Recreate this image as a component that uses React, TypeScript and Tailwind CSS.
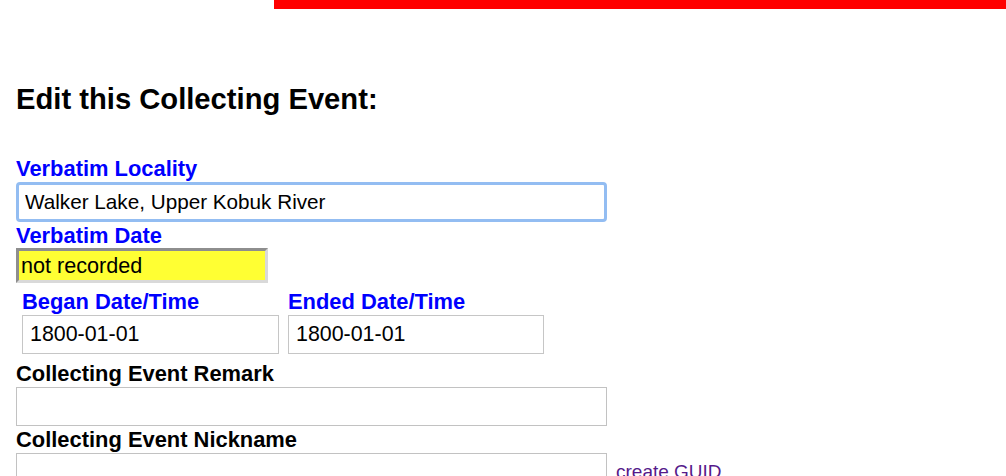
export default function App() {
  return (
    <div className="min-h-screen bg-white font-['Liberation_Sans',Arial,sans-serif] text-black">
      <div className="ml-[274px] h-[9px] bg-[#ff0000]"></div>
      <div className="pl-[16px]">
        <h2 className="mt-[74px] text-[29.2px] leading-[33px] font-bold">Edit this Collecting Event:</h2>

        <div className="mt-[41px] text-[21.9px] leading-[24px] font-bold text-[#0000ff]">Verbatim Locality</div>
        <input
          readOnly
          value="Walker Lake, Upper Kobuk River"
          className="mt-[1px] block box-border h-[40px] w-[591px] rounded-[4px] border-[3px] border-[#93bdf2] bg-white pl-[6px] text-[20.7px] outline-none"
        />

        <div className="mt-[2px] text-[21.9px] leading-[24px] font-bold text-[#0000ff]">Verbatim Date</div>
        <input
          readOnly
          value="not recorded"
          className="block box-border h-[35px] w-[252px] border-[3px] border-t-[#8e8e8e] border-l-[#8e8e8e] border-r-[#d9d9d9] border-b-[#d9d9d9] bg-[#ffff33] pl-[2px] text-[21.6px] outline-none"
        />

        <div className="mt-[7px] flex gap-[9px] pl-[6px]">
          <div className="flex w-[257px] flex-col">
            <div className="text-[21.9px] leading-[24px] font-bold text-[#0000ff]">Began Date/Time</div>
            <input
              readOnly
              value="1800-01-01"
              className="mt-[1px] block box-border h-[39px] w-[257px] border border-[#c6c6c6] bg-white pl-[7px] text-[21.4px] outline-none"
            />
          </div>
          <div className="flex w-[256px] flex-col">
            <div className="text-[21.9px] leading-[24px] font-bold text-[#0000ff]">Ended Date/Time</div>
            <input
              readOnly
              value="1800-01-01"
              className="mt-[1px] block box-border h-[39px] w-[256px] border border-[#c6c6c6] bg-white pl-[7px] text-[21.4px] outline-none"
            />
          </div>
        </div>

        <div className="mt-[8px] text-[21.9px] leading-[24px] font-bold">Collecting Event Remark</div>
        <input
          readOnly
          value=""
          className="mt-[1px] block box-border h-[39px] w-[591px] border border-[#c2c2c2] bg-white outline-none"
        />

        <div className="mt-[2px] text-[21.9px] leading-[24px] font-bold">Collecting Event Nickname</div>
        <div className="mt-[1px] flex items-start">
          <input
            readOnly
            value=""
            className="block box-border h-[39px] w-[591px] border border-[#c2c2c2] bg-white outline-none"
          />
          <a href="#" className="ml-[9px] mt-[8px] text-[19px] leading-[22px] text-[#551a8b]">create GUID</a>
        </div>
      </div>
    </div>
  );
}
